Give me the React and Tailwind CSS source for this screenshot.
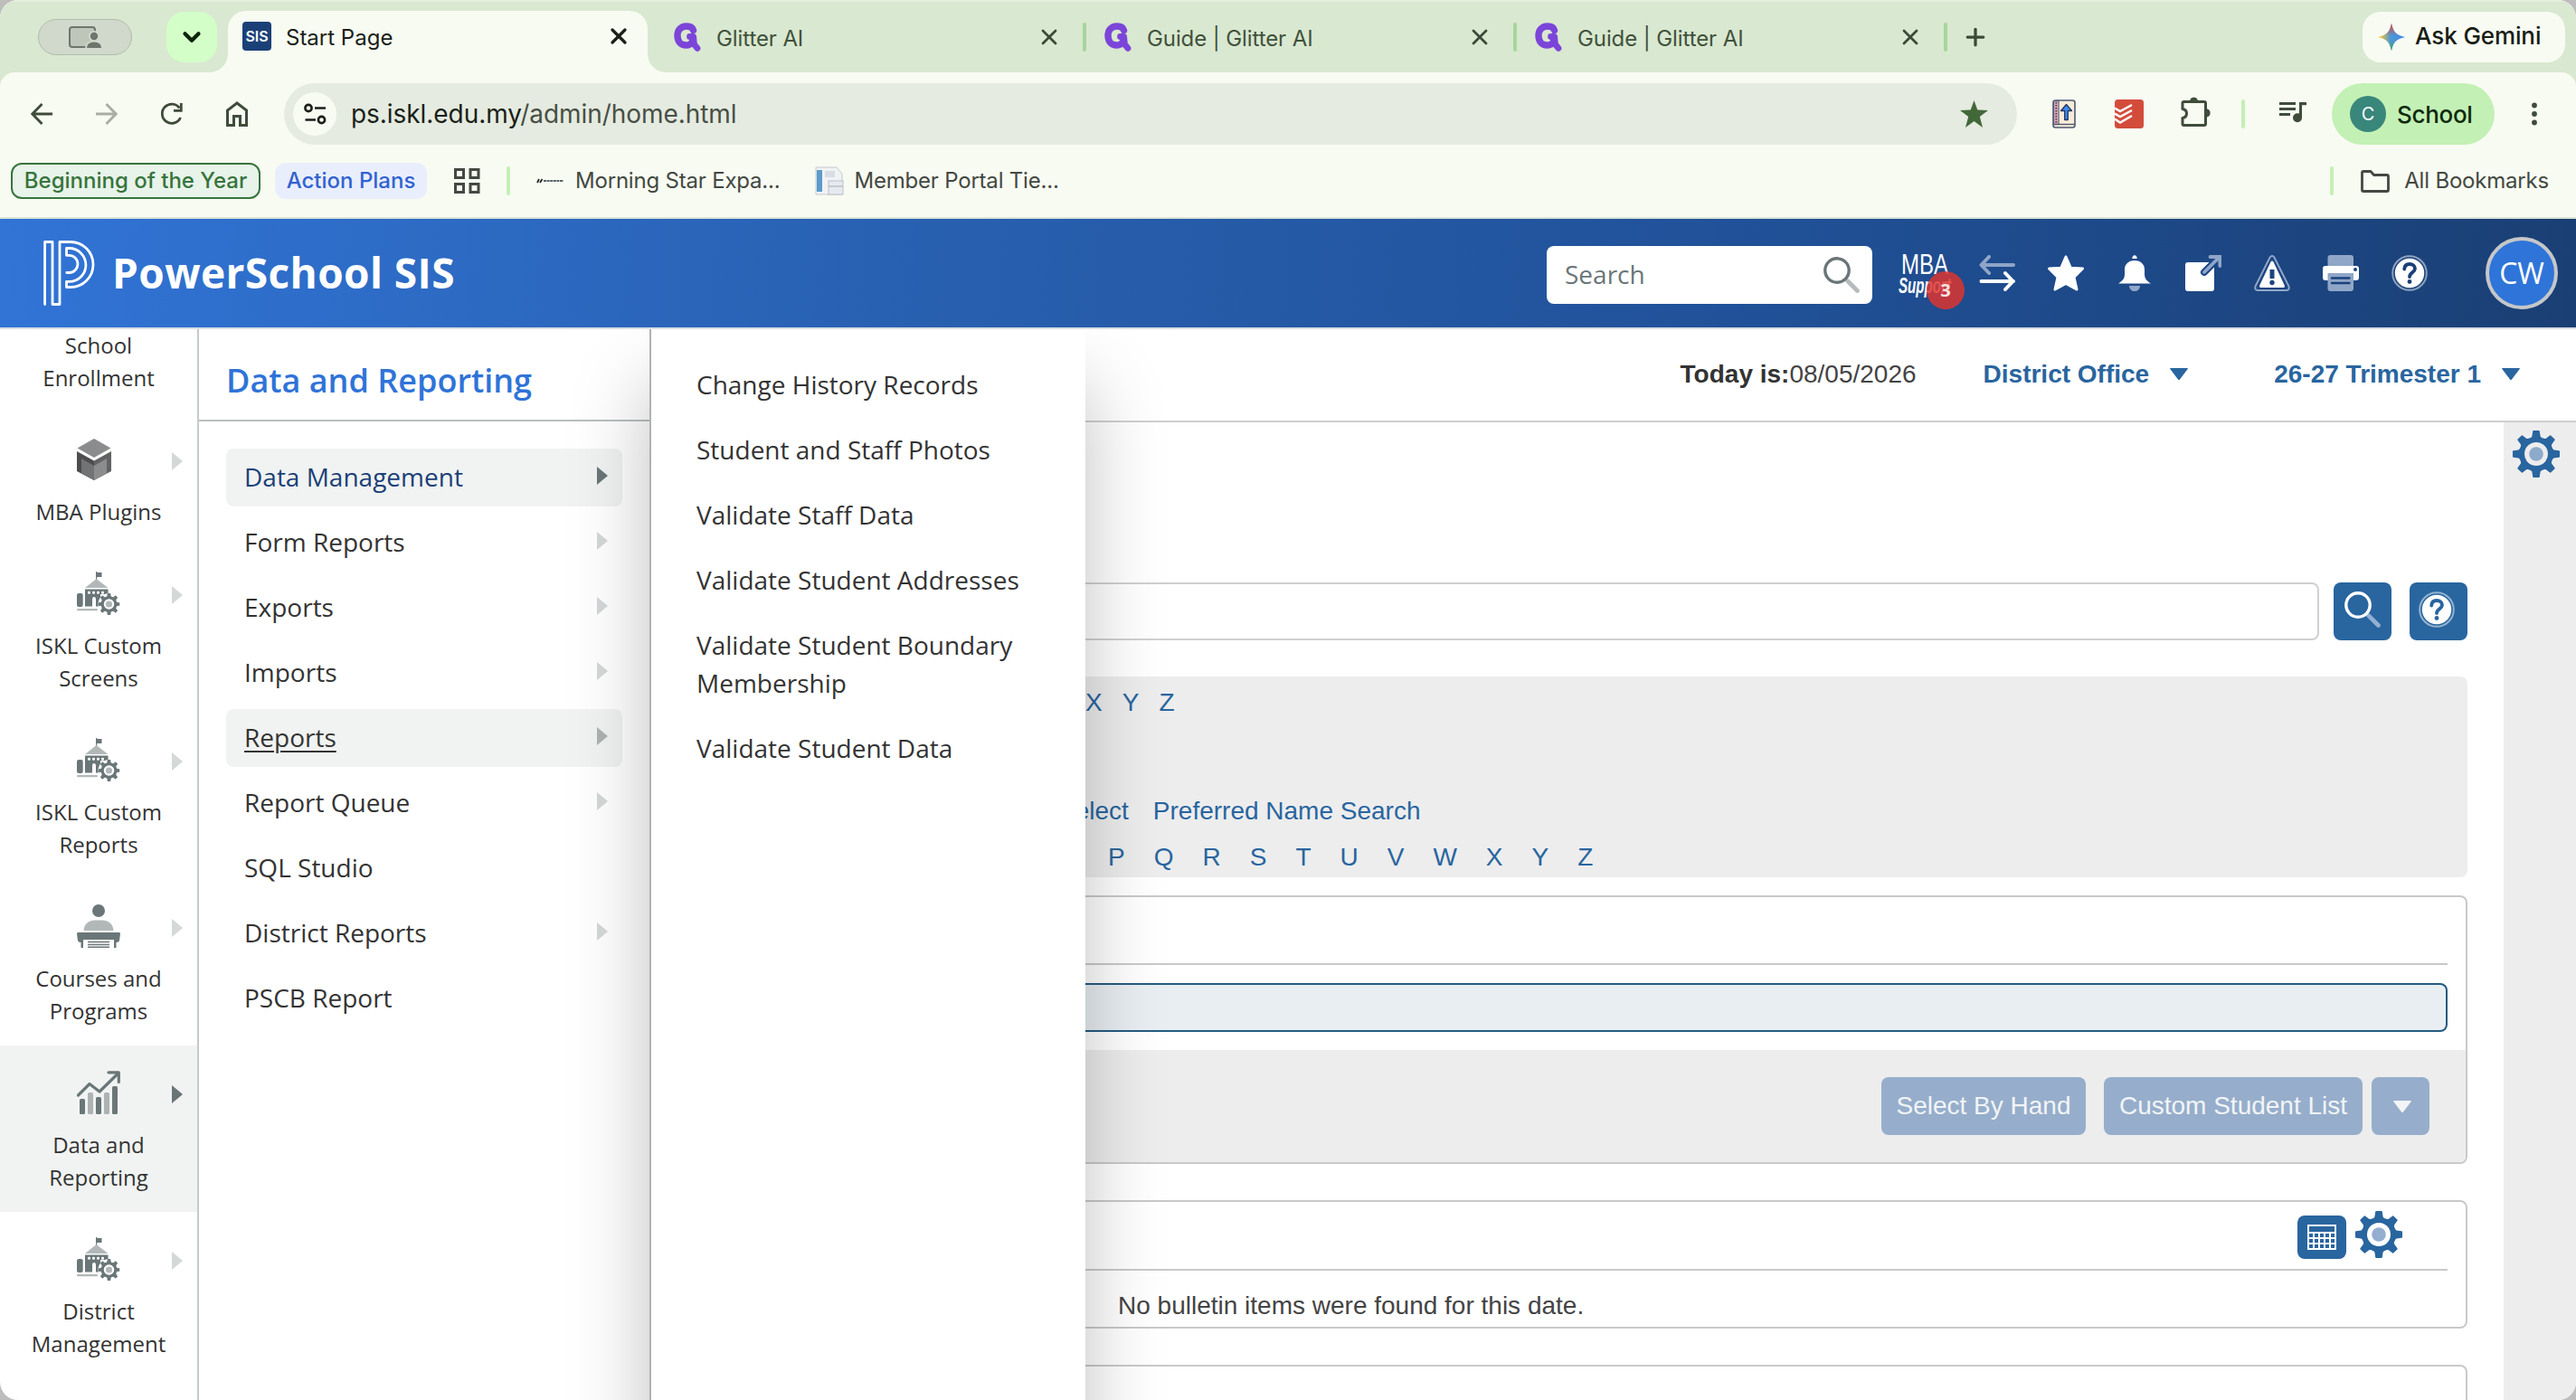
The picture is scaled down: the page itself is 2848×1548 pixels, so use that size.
import { Fragment } from 'react';
import { X, Plus, ChevronDown } from 'lucide-react';
import clsx from 'clsx';

const chrome = "font-['Inter',sans-serif]";
const openSans = "font-['Open_Sans',sans-serif]";
const arial = "font-['Liberation_Sans',Arial,sans-serif]";

const sideItems = [
  { lines: ['School', 'Enrollment'] },
  { lines: ['MBA Plugins'], icon: 'cube' },
  { lines: ['ISKL Custom', 'Screens'], icon: 'school' },
  { lines: ['ISKL Custom', 'Reports'], icon: 'school' },
  { lines: ['Courses and', 'Programs'], icon: 'courses' },
  { lines: ['Data and', 'Reporting'], icon: 'chart', active: true },
  { lines: ['District', 'Management'], icon: 'school' },
];

const menuItems = [
  { label: 'Data Management', arrow: true, selected: true },
  { label: 'Form Reports', arrow: true },
  { label: 'Exports', arrow: true },
  { label: 'Imports', arrow: true },
  { label: 'Reports', arrow: true, hovered: true },
  { label: 'Report Queue', arrow: true },
  { label: 'SQL Studio' },
  { label: 'District Reports', arrow: true },
  { label: 'PSCB Report' },
];

const subItems = [
  'Change History Records',
  'Student and Staff Photos',
  'Validate Staff Data',
  'Validate Student Addresses',
  'Validate Student Boundary Membership',
  'Validate Student Data',
];

/* ---------- icons ---------- */

const GlitterIcon = () => (
  <svg width="30" height="32" viewBox="0 0 30 32" fill="none" stroke="#7c45d9">
    <path d="M21.5 8.5 C20.5 5 17.5 4 14 4 C7.5 4 4 8.5 4 14.5 C4 21 8 25 13.5 25 C18.5 25 21 22 21.5 17" strokeWidth="7.4" strokeLinecap="round" />
    <path d="M17.5 15.5 H21.5 L22.5 24 L26 28.3" strokeWidth="6.8" strokeLinecap="round" strokeLinejoin="round" />
  </svg>
);

const TOOTH = 'M22.2 0.8 Q22.4 0 23.2 0 H28.8 Q29.6 0 29.8 0.8 L30.6 6.5 Q31.5 8 34 9 L26 20 L18 9 Q20.5 8 21.4 6.5 Z';

const Gear = ({ size = 52, color = '#29659f', hole = '#ffffff', dot = '#93aed0', className }) => (
  <svg width={size} height={size} viewBox="0 0 52 52" className={className}>
    <g fill={color}>
      {[0, 45, 90, 135, 180, 225, 270, 315].map((a) => (
        <path key={a} d={TOOTH} transform={`rotate(${a} 26 26)`} />
      ))}
      <circle cx="26" cy="26" r="18" />
    </g>
    <circle cx="26" cy="26" r="13" fill={hole} />
    <circle cx="26" cy="26" r="7.8" fill={dot} />
  </svg>
);

const CubeIcon = () => (
  <svg width="38" height="48" viewBox="0 0 38 48">
    <path d="M19 1 L37.5 11.5 L19 22 L0.5 11.5 Z" fill="#8b8c8e" />
    <path d="M0 15 L19 25.5 V47 L0 37 Z" fill="#4d4c4e" />
    <path d="M38 15 L19 25.5 V47 L38 37 Z" fill="#626164" />
    <path d="M5 23 L19 31 V47 L5 39.5 Z" fill="#727375" />
    <path d="M33 23 L19 31 V47 L33 39.5 Z" fill="#8b8c8e" />
  </svg>
);

const SchoolIcon = ({ bg }) => (
  <svg width="48" height="48" viewBox="0 0 48 48">
    <path d="M21 0 H22.2 V1 H27.5 V6 H22.2 V9 H21 Z" fill="#6a7678" />
    <path d="M21.5 8 L34.5 18 H9 Z" fill="#b2b8b8" />
    <path d="M9 19.5 H34.5 V25 H26 V38.5 H9 Z" fill="#6a7678" />
    <rect x="0" y="24" width="6.7" height="15" rx="2" fill="#6a7678" />
    <rect x="0" y="41" width="23" height="2.2" rx="1" fill="#b2b8b8" />
    <g fill={bg}>
      <rect x="12" y="21.8" width="3" height="3" rx="1.2" />
      <rect x="17" y="21.8" width="3" height="3" rx="1.2" />
      <rect x="22" y="21.8" width="3" height="3" rx="1.2" />
      <rect x="27" y="21.8" width="3" height="3" rx="1.2" />
      <path d="M17 39 V31 Q17 28 19 28 Q21 28 21 31 V39 Z" />
      <circle cx="35.5" cy="36" r="12" />
    </g>
    <svg x="23.5" y="24" width="24" height="24" viewBox="0 0 52 52">
      <g fill="#6a7678">
        {[0, 45, 90, 135, 180, 225, 270, 315].map((a) => (
          <path key={a} d={TOOTH} transform={`rotate(${a} 26 26)`} />
        ))}
        <circle cx="26" cy="26" r="18" />
      </g>
      <circle cx="26" cy="26" r="12.5" fill={bg} />
      <circle cx="26" cy="26" r="7.8" fill="#b2b8b8" />
    </svg>
  </svg>
);

const CoursesIcon = () => (
  <svg width="48" height="48" viewBox="0 0 48 48">
    <circle cx="24" cy="7" r="7" fill="#6a7678" />
    <path d="M7.5 29 C8 21 14 17.5 20 17.5 H28 C34 17.5 40 21 40.5 29 Z" fill="#b2b8b8" />
    <path d="M1 31 H47 Q48 31 48 32.5 L47 40 Q46.5 42 44 42 H43.5 V48 H41 V39 H7 V48 H4.5 V42 H4 Q1.5 42 1 40 L0 32.5 Q0 31 1 31 Z" fill="#6a7678" />
    <path d="M12 41.5 H36 M12 44.4 H36 M12 47.3 H36" stroke="#6a7678" strokeWidth="1.5" />
  </svg>
);

const ChartIcon = () => (
  <svg width="48" height="48" viewBox="0 0 48 48">
    <g fill="#6a7678">
      <rect x="3" y="31" width="6" height="17" rx="1.5" />
      <rect x="21" y="29" width="6" height="19" rx="1.5" />
      <rect x="39" y="17" width="6" height="31" rx="1.5" />
    </g>
    <g fill="#adb3b3">
      <rect x="12" y="24" width="6" height="24" rx="1.5" />
      <rect x="30" y="24" width="6" height="24" rx="1.5" />
    </g>
    <path d="M1.5 27 L14 14.5 L25 23 L45.5 3" fill="none" stroke="#6a7678" strokeWidth="3.2" strokeLinecap="round" strokeLinejoin="round" />
    <path d="M35 1.8 H46.3 V12.5" fill="none" stroke="#6a7678" strokeWidth="3.2" strokeLinecap="round" strokeLinejoin="round" />
  </svg>
);

const HelpIcon = ({ dark, className }) => (
  <svg width="40" height="40" viewBox="0 0 40 40" className={className}>
    <circle cx="20" cy="20" r="18.8" fill="none" stroke="#fff" strokeOpacity="0.5" strokeWidth="2" />
    <circle cx="20" cy="20" r="16.2" fill="#fff" />
    <path d="M14.2 15.5 C14.5 11.5 17 10 20 10 C23.5 10 26 12 26 15 C26 19 20 19.5 20 24" fill="none" stroke={dark} strokeWidth="3.8" strokeLinecap="round" />
    <circle cx="20" cy="29.5" r="2.4" fill={dark} />
  </svg>
);

const SearchIcon = ({ color, handle }) => (
  <svg width="40" height="40" viewBox="0 0 40 40" fill="none">
    <path d="M26.5 26.5 L37.5 37.5" stroke={handle} strokeWidth="4.6" strokeLinecap="round" />
    <circle cx="15" cy="15" r="13.2" stroke={color} strokeWidth="3.4" />
  </svg>
);

const Logo = () => (
  <svg width="57" height="72" viewBox="0 0 57 72" fill="none" stroke="#fff" strokeWidth="2.8" strokeLinejoin="round" strokeLinecap="round">
    <path d="M1.6 70.6 V1.5 H10 V70.5 H18 V1.5 H30 A25 25 0 0 1 30 51.5 H25.5 V45.3 H28.5 A18.4 18.4 0 0 0 28.5 8.5 H25.5 V16.3 H28.3 A9.6 9.6 0 0 1 28.3 35.5 H25.8" />
  </svg>
);

const TriRight = ({ className }) => (
  <svg width="12" height="20" viewBox="0 0 12 20" className={className} fill="currentColor">
    <path d="M0 0 L12 10 L0 20 Z" />
  </svg>
);

const TriDown = ({ className }) => (
  <svg width="20" height="13" viewBox="0 0 20 13" className={className} fill="currentColor">
    <path d="M0.5 0 H19.5 Q20 0.5 19.7 1 L11 12.4 Q10 13.4 9 12.4 L0.3 1 Q0 0.5 0.5 0 Z" />
  </svg>
);

/* ---------- browser ---------- */

const Tab = ({ title }) => (
  <div className="flex h-full w-[476px] items-center">
    <GlitterIcon />
    <span className="ml-[17px] flex-1 pt-[3px] text-[#41513c] tracking-[-0.1px]">{title}</span>
    <X size={28} strokeWidth={2.4} className="mr-[23px] text-[#3b4a37]" />
    <span className="mr-[20px] h-8 w-1 rounded-full bg-[#a6d69b]" />
  </div>
);

const TabStrip = () => (
  <div className="flex h-[80px] items-center border-t-2 border-[#e6efe0] bg-[#d9e8d0] pl-[42px] text-[24px] leading-none">
    <div className="flex h-10 w-[104px] items-center justify-center rounded-full border border-[#b3bcae] bg-[#d1d8cc]">
      <svg width="36" height="26" viewBox="0 0 36 26">
        <rect x="1" y="2" width="28" height="22" rx="3" fill="#bec6ba" stroke="#6f756c" strokeWidth="2" />
        <circle cx="28" cy="12" r="6" fill="#d1d8cc" />
        <path d="M18 26 Q18 17 28 17 Q36 17 36 26 Z" fill="#d1d8cc" />
        <circle cx="28" cy="12" r="4.2" fill="#6f756c" />
        <path d="M20 25 Q20 18.5 28 18.5 Q36 18.5 36 25 Z" fill="#6f756c" />
      </svg>
    </div>
    <div className="ml-[38px] flex h-14 w-14 items-center justify-center rounded-[20px] bg-[#d3fec8]">
      <ChevronDown size={30} strokeWidth={3.4} className="text-[#0b2308]" />
    </div>
    <div className="relative ml-3 mt-[10px] flex h-[68px] w-[464px] items-center rounded-t-[20px] bg-[#f8fbf2] pb-[12px] pl-4">
      <span className="absolute -left-5 bottom-0 h-5 w-5 bg-[radial-gradient(circle_at_0_0,transparent_19.5px,#f8fbf2_20px)]" />
      <span className="absolute -right-5 bottom-0 h-5 w-5 bg-[radial-gradient(circle_at_100%_0,transparent_19.5px,#f8fbf2_20px)]" />
      <span className="flex h-8 w-8 items-center justify-center rounded-[4px] bg-[#1b4077] text-[16px] font-semibold text-white">SIS</span>
      <span className="ml-4 flex-1 pt-[3px] text-[#1a1f18]">Start Page</span>
      <X size={28} strokeWidth={2.8} className="mr-[18px] text-[#1a1f18]" />
    </div>
    <div className="ml-[29px] flex h-full items-center">
      <Tab title="Glitter AI" />
      <Tab title="Guide | Glitter AI" />
      <Tab title="Guide | Glitter AI" />
    </div>
    <Plus size={30} strokeWidth={2.6} className="-ml-[4px] text-[#3b4a37]" />
    <div className="ml-auto mr-3 flex h-14 w-[224px] items-center rounded-[20px] bg-[#f8fbf2] pl-[17px]">
      <svg width="30" height="30" viewBox="0 0 30 30">
        <defs>
          <linearGradient id="gemA" x1="0" y1="0" x2="1" y2="0">
            <stop offset="0.1" stopColor="#f6c445" />
            <stop offset="0.45" stopColor="#4f9ad0" />
            <stop offset="1" stopColor="#4285f4" />
          </linearGradient>
          <linearGradient id="gemB" x1="0" y1="0" x2="0" y2="1">
            <stop offset="0" stopColor="#ea4335" />
            <stop offset="0.45" stopColor="#ea4335" stopOpacity="0" />
            <stop offset="0.65" stopColor="#34a853" stopOpacity="0" />
            <stop offset="1" stopColor="#34a853" />
          </linearGradient>
        </defs>
        <path d="M15 0 C17.500 10 20 12.500 30 15 C20 17.500 17.500 20 15 30 C12.500 20 10 17.500 0 15 C10 12.500 12.500 10 15 0 Z" fill="url(#gemA)" />
        <path d="M15 0 C17.500 10 20 12.500 30 15 C20 17.500 17.500 20 15 30 C12.500 20 10 17.500 0 15 C10 12.500 12.500 10 15 0 Z" fill="url(#gemB)" />
      </svg>
      <span className="ml-[11px] pb-[3px] text-[26px] font-medium tracking-[-0.1px] text-[#171d15]">Ask Gemini</span>
    </div>
  </div>
);

const Toolbar = () => (
  <div className="bg-[#d9e8d0]">
    <div className="flex h-[92px] items-center rounded-t-[16px] bg-[#f8fbf2] pl-[34px] leading-none">
      <svg width="24" height="24" viewBox="0 0 24 24" fill="none" stroke="#3f4c3a" strokeWidth="2.8">
        <path d="M24 12 H2 M12.5 1 L1.8 12 L12.5 23" />
      </svg>
      <svg width="24" height="24" viewBox="0 0 24 24" fill="none" stroke="#a9ada4" strokeWidth="2.8" className="ml-12">
        <path d="M0 12 H22 M11.5 1 L22.2 12 L11.5 23" />
      </svg>
      <svg width="26" height="26" viewBox="0 0 26 26" fill="none" stroke="#3f4c3a" strokeWidth="2.8" className="ml-[47px]">
        <path d="M22.6 17 A10.6 10.6 0 1 1 21.5 6.5 M23.3 1 V9.3 H15" />
      </svg>
      <svg width="24" height="28" viewBox="0 0 24 28" fill="none" stroke="#3f4c3a" strokeWidth="3" className="ml-[47px]">
        <path d="M1.5 26.5 V10 L12 2 L22.5 10 V26.5 H15.5 V16.5 H8.5 V26.5 Z" />
      </svg>
      <div className="ml-10 flex h-[68px] w-[1916px] items-center rounded-full bg-[#e5ebe0] pl-[10px]">
        <span className="flex h-12 w-12 items-center justify-center rounded-full bg-[#f8fbf2]">
          <svg width="26" height="24" viewBox="0 0 26 24" fill="none" stroke="#1a1f18" strokeWidth="2.6">
            <circle cx="6" cy="5.5" r="3.6" />
            <path d="M13 5.5 H25 M2.5 18.5 H14" />
            <circle cx="20.5" cy="18.5" r="3.6" />
          </svg>
        </span>
        <span className="ml-4 flex-1 text-[28px] tracking-[-0.06px] text-[#484f45]">
          <span className="text-[#1a1f18]">ps.iskl.edu.my</span>/admin/home.html
        </span>
        <svg width="31" height="30" viewBox="0 0 31 30" className="mr-8" fill="#42683a">
          <path d="M15.5 0 L19.3 10.6 L31 11 L21.8 18 L25 30 L15.5 23 L6 30 L9.2 18 L0 11 L11.7 10.6 Z" />
        </svg>
      </div>
      <svg width="26" height="32" viewBox="0 0 26 32" className="ml-[39px]">
        <rect x="1" y="1" width="24" height="30" rx="2.5" fill="#f8ecd9" stroke="#4d5a72" strokeWidth="1.6" />
        <rect x="1.6" y="1.6" width="5.5" height="26" fill="#d9a6b4" stroke="#4d5a72" strokeWidth="1" />
        <path d="M4.3 3 V27" stroke="#3a3550" strokeWidth="1.6" strokeDasharray="1.5 1.5" />
        <path d="M1.5 27.5 H25" stroke="#4d5a72" strokeWidth="1.4" />
        <path d="M15.5 5.5 L21.5 12.5 H17.3 V22.5 H13.7 V12.5 H9.5 Z" fill="#3f8cf0" stroke="#22355c" strokeWidth="1.3" strokeLinejoin="round" />
      </svg>
      <svg width="32" height="32" viewBox="0 0 32 32" className="ml-[43px]">
        <rect width="32" height="32" rx="3.5" fill="#d34c3b" />
        <path d="M0 9.5 L6 13 L19 6 M0 15.5 L6 19 L19 12 M0 21.5 L6 25.5 L19 18" fill="none" stroke="#fff" strokeWidth="2.5" />
      </svg>
      <svg width="33" height="33" viewBox="0 0 33 33" className="-mt-[5px] ml-[41px]" fill="none" stroke="#3f4c3a" strokeWidth="3" strokeLinejoin="round">
        <path d="M2 13.5 V7 Q2 5.5 3.5 5.5 H26 Q27.5 5.5 27.5 7 V30 Q27.5 31.5 26 31.5 H3.5 Q2 31.5 2 30 V23.5 C8 22.5 8 14.5 2 13.5 Z" />
        <path d="M10.5 5 A3.8 3.8 0 0 1 18.5 5 Z M28 13.8 A4 4 0 0 1 28 22 Z" fill="#3f4c3a" strokeWidth="1" />
      </svg>
      <span className="ml-[34px] h-8 w-1 rounded-full bg-[#c3f0b5]" />
      <svg width="31" height="24" viewBox="0 0 31 24" className="-mt-1 ml-[38px]">
        <path d="M0 2.5 H18 M0 8.5 H18 M0 14.5 H12" stroke="#3f4c3a" strokeWidth="2.9" />
        <path d="M22 1 H30 V4.2 H25 V19 H22 Z" fill="#3f4c3a" />
        <circle cx="20" cy="18.2" r="5" fill="#3f4c3a" />
      </svg>
      <div className="ml-[27px] flex h-[68px] w-[180px] items-center rounded-full bg-[#c3f0b5] pl-5">
        <span className="flex h-10 w-10 items-center justify-center rounded-full bg-[#39867b] text-[20px] text-white">C</span>
        <span className="ml-3 pt-[1px] text-[26px] font-medium tracking-[-0.3px] text-[#0f2a0b]">School</span>
      </div>
      <svg width="6" height="26" viewBox="0 0 6 26" className="ml-[41px]" fill="#3f4c3a">
        <circle cx="3" cy="3.5" r="2.9" />
        <circle cx="3" cy="13" r="2.9" />
        <circle cx="3" cy="22.5" r="2.9" />
      </svg>
    </div>
  </div>
);

const Bookmarks = () => (
  <div className="flex h-[70px] items-center border-b-2 border-[#dbe3d6] bg-[#f8fbf2] pb-[12px] pl-3 text-[24px] leading-none text-[#434842]">
    <span className="flex h-10 w-[276px] items-center justify-center rounded-[12px] border-2 border-[#37743c] bg-[#e8f3ea] font-medium text-[#37743c]">Beginning of the Year</span>
    <span className="ml-4 flex h-10 w-[168px] items-center justify-center rounded-[12px] bg-[#e9eefd] font-medium text-[#3262cf]">Action Plans</span>
    <svg width="29" height="28" viewBox="0 0 29 28" className="ml-[30px]" fill="none" stroke="#434842" strokeWidth="3">
      <path d="M1.5 1.5 H10.5 V10.5 H1.5 Z M18 1.5 H27 V10.5 H18 Z M1.5 17.5 H10.5 V26.5 H1.5 Z M18 17.5 H27 V26.5 H18 Z" />
    </svg>
    <span className="ml-[29px] h-8 w-1 rounded-full bg-[#c3f0b5]" />
    <svg width="31" height="6" viewBox="0 0 31 6" className="ml-[29px]">
      <path d="M1 5 L3 1 M4 5 L6.5 1" stroke="#22262a" strokeWidth="1.8" />
      <path d="M8 3 H30" stroke="#5a6468" strokeWidth="2" strokeDasharray="3 0.6" />
    </svg>
    <span className="ml-[12px] tracking-[-0.2px]">Morning Star Expa...</span>
    <svg width="32" height="32" viewBox="0 0 32 32" className="ml-[39px]">
      <path d="M1 1 H24 L30 8 V31 H1 Z" fill="#f0f2f4" stroke="#c3c9d0" strokeWidth="1" />
      <rect x="2" y="4" width="6" height="24" fill="#5b9bcb" />
      <rect x="11" y="5" width="11" height="7" fill="#d7dde4" />
      <rect x="15" y="16" width="16" height="15" fill="#e6e9ee" stroke="#b9c0c9" strokeWidth="1" />
      <path d="M15 22 H31" stroke="#b9c0c9" strokeWidth="1.5" />
    </svg>
    <span className="ml-[11px] tracking-[-0.2px]">Member Portal Tie...</span>
    <span className="ml-auto h-8 w-1 rounded-full bg-[#c3f0b5]" />
    <svg width="32" height="25" viewBox="0 0 32 25" className="ml-[30px]" fill="none" stroke="#434842" strokeWidth="2.8" strokeLinejoin="round">
      <path d="M1.5 3 Q1.5 1.5 3 1.5 H11 L14.5 5.5 H29 Q30.5 5.5 30.5 7 V22 Q30.5 23.5 29 23.5 H3 Q1.5 23.5 1.5 22 Z" />
    </svg>
    <span className="ml-[16px] mr-[30px] tracking-[-0.2px]">All Bookmarks</span>
  </div>
);

/* ---------- PowerSchool ---------- */

const Header = () => (
  <div className={clsx('relative z-20 flex h-[122px] items-center border-b-2 border-[#d9dde2] bg-[linear-gradient(93deg,#3174d6_0%,#2860b0_36%,#21529a_66%,#1a3f74_100%)] pl-12', openSans)}>
    <Logo />
    <span className="ml-[19px] pb-[3px] text-[46px] font-bold leading-none tracking-[0.4px] text-white">PowerSchool SIS</span>
    <div className="ml-auto mt-[4px] flex h-16 w-[360px] items-center rounded-[8px] bg-white pl-5 pr-[14px]">
      <span className="flex-1 pb-[2px] text-[28px] leading-none text-[#6a7577]">Search</span>
      <SearchIcon color="#6a7577" handle="#b5baba" />
    </div>
    <div className="relative ml-[28px] h-[64px] w-[78px]">
      <svg width="78" height="64" viewBox="0 0 78 64" fill="#fff" className="overflow-visible font-['Liberation_Sans',Arial,sans-serif]">
        <text x="4" y="33" fontSize="31" textLength="52" lengthAdjust="spacingAndGlyphs">MBA</text>
        <text x="1" y="54" fontSize="24" fontWeight="bold" fontStyle="italic" textLength="58" lengthAdjust="spacingAndGlyphs">Support</text>
      </svg>
      <span className="absolute left-[32px] top-[30px] flex h-[42px] w-[42px] items-center justify-center rounded-full bg-[#dc3530]/85 text-[20px] font-bold leading-none text-white/85">3</span>
    </div>
    <div className="ml-[12px] flex items-center gap-9">
      <svg width="40" height="40" viewBox="0 0 40 40" fill="none" stroke="#fff" strokeWidth="4" strokeLinecap="round" strokeLinejoin="round">
        <path d="M2.5 11 H38 M11 2 L2.5 11 L11 20" stroke="#90a6c8" />
        <path d="M2.5 29 H38 M29 20 L37.5 29 L29 38" />
      </svg>
      <svg width="40" height="40" viewBox="0 0 40 40" fill="#fff" stroke="#fff" strokeWidth="3" strokeLinejoin="round">
        <path d="M20 2 L25.2 14.2 L38.5 15 L29 24.5 L32 38 L20 31.5 L8 38 L11 24.5 L1.5 15 L14.8 14.2 Z" />
      </svg>
      <svg width="40" height="40" viewBox="0 0 40 40">
        <path d="M17.3 4 Q17.5 0.3 20 0.3 Q22.5 0.3 22.7 4 Z" fill="#fff" />
        <path d="M20 6 C27 6 31 10.5 31 16 V21 C31 26.5 33.5 28.5 38 31.5 H2 C6.5 28.5 9 26.5 9 21 V16 C9 10.5 13 6 20 6 Z" fill="#fff" />
        <path d="M13.8 34 H26.2 C25.5 38 23.5 40 20 40 C16.5 40 14.5 38 13.8 34 Z" fill="#90a6c8" />
      </svg>
      <svg width="40" height="40" viewBox="0 0 40 40">
        <rect x="0" y="8" width="32" height="32" rx="3" fill="#fff" />
        <path d="M21 19 L37 3" stroke="#1c478a" strokeWidth="8" strokeLinecap="round" />
        <path d="M21 19 L37 3 M27.5 2 H38.3 V12" fill="none" stroke="#90a6c8" strokeWidth="3.8" strokeLinecap="round" />
      </svg>
      <svg width="40" height="40" viewBox="0 0 40 40">
        <path d="M17.5 2.7 Q20 -0.6 22.5 2.7 L38.5 34.5 Q39.5 38.7 36 39 H4 Q0.5 38.7 1.5 34.5 Z" fill="none" stroke="#90a6c8" strokeWidth="2" />
        <path d="M18.5 7.5 Q20 5.5 21.5 7.5 L34 34 Q34.3 36 32.5 36 H7.5 Q5.7 36 6 34 Z" fill="#fff" />
        <path d="M17.5 16 H22.5 V26 H17.5 Z" fill="#1c457f" />
        <circle cx="20" cy="30.5" r="2.7" fill="#1c457f" />
      </svg>
      <svg width="40" height="40" viewBox="0 0 40 40">
        <path d="M5.5 14 V3 Q5.5 0 8.5 0 H31 Q34 0 34 3 V14 Z" fill="#90a6c8" />
        <path d="M3 12 H37 Q40 12 40 15 V25 Q40 28 37 28 H3 Q0 28 0 25 V15 Q0 12 3 12 Z" fill="#fff" />
        <circle cx="36" cy="16" r="2" fill="#1b427b" />
        <path d="M5.5 20 H34 V37 Q34 40 31 40 H8.5 Q5.5 40 5.5 37 Z" fill="#90a6c8" />
        <path d="M10 25.5 H29.5 M10 31 H29.5" stroke="#1b427b" strokeWidth="2.4" strokeLinecap="round" />
      </svg>
      <HelpIcon dark="#1b4178" />
    </div>
    <span className="ml-16 mr-5 flex h-20 w-20 items-center justify-center rounded-full border-4 border-[#c5c7c9] bg-[#2f74d8] text-[32px] leading-none text-white">CW</span>
  </div>
);

const SideIcon = ({ name, bg }) => {
  switch (name) {
    case 'cube': return <CubeIcon />;
    case 'courses': return <CoursesIcon />;
    case 'chart': return <ChartIcon />;
    default: return <SchoolIcon bg={bg} />;
  }
};

const Sidebar = () => (
  <div className={clsx('h-full w-[220px] shrink-0 border-r-2 border-[#c4cacb] text-center text-[24px] leading-[36px] text-[#333]', openSans)}>
    {sideItems.map(({ lines, icon, active }, i) => (
      <div key={i} className={clsx('pb-5', icon && 'pt-7', active && 'bg-[#f1f3f2]')}>
        {icon && (
          <div className="mb-4 flex h-12 pl-[85px] pr-4">
            <div className="w-[48px]"><SideIcon name={icon} bg={active ? '#f1f3f2' : '#fff'} /></div>
            <TriRight className={clsx('ml-auto mt-4', active ? 'text-[#6a7577]' : 'text-[#d4d8d8]')} />
          </div>
        )}
        {lines.map((l) => <div key={l}>{l}</div>)}
      </div>
    ))}
  </div>
);

const MenuPanel = () => (
  <div className={clsx('h-full w-[498px] shrink-0', openSans)}>
    <div className="flex h-[102px] items-center border-b-2 border-[#b9c0c0] pl-[30px] pt-[13px] text-[36px] font-semibold text-[#2f73d8]">Data and Reporting</div>
    <div className="flex flex-col gap-2 px-[30px] pt-[30px]">
      {menuItems.map(({ label, arrow, selected, hovered }) => (
        <div
          key={label}
          className={clsx(
            'flex h-16 items-center rounded-[8px] pl-5 pr-4 text-[28px]',
            selected ? 'bg-[#f1f3f2] text-[#1b4077]' : 'text-[#333]',
            hovered && 'bg-[#f1f3f2]'
          )}
        >
          <span className={clsx('flex-1 pb-[2px]', hovered && 'underline decoration-2 underline-offset-[4px]')}>{label}</span>
          {arrow && (
            <TriRight className={clsx('-mt-1', selected ? 'text-[#6a7577]' : hovered ? 'text-[#adb3b3]' : 'text-[#d4d8d8]')} />
          )}
        </div>
      ))}
    </div>
  </div>
);

const SubMenu = () => (
  <div className={clsx('relative z-10 flex h-[1400px] w-[482px] shrink-0 flex-col gap-[30px] border-l-2 border-[#adb3b3] bg-white pl-[50px] pr-[60px] pt-[40px] text-[28px] leading-[42px] text-[#333] shadow-[0_60px_80px_rgba(0,0,0,0.25)]', openSans)}>
    {subItems.map((s) => <div key={s}>{s}</div>)}
  </div>
);

const QuickSearch = () => (
  <>
    <div className="flex h-16 items-center">
      <div className="h-16 flex-1 rounded-r-[8px] border-2 border-l-0 border-[#d0d0d0] bg-white" />
      <div className="ml-4 flex h-16 w-16 items-center justify-center rounded-[8px] bg-[#29659f] pb-1">
        <SearchIcon color="#fff" handle="#93b0d2" />
      </div>
      <div className="ml-5 flex h-16 w-16 items-center justify-center rounded-[8px] bg-[#29659f] pb-1 pr-1">
        <HelpIcon dark="#29659f" />
      </div>
    </div>
    <div className="mt-10 h-[222px] rounded-r-[8px] bg-[#ededed] pt-[11px] text-[28px] leading-[36px] text-[#29659f]">
      <div className="flex gap-[22px]">
        <span>X</span><span>Y</span><span>Z</span>
      </div>
      <div className="-ml-[30px] mt-[84px] flex gap-[27px]">
        <span>Select</span><span>Preferred Name Search</span>
      </div>
      <div className="mt-[15px] flex gap-[32px] pl-[25px]">
        {'PQRSTUVWXYZ'.split('').map((l) => <span key={l}>{l}</span>)}
      </div>
    </div>
  </>
);

const Main = () => (
  <div className={clsx('min-w-0 flex-1', arial)}>
    <div className="flex h-[103px] items-center justify-end border-b-2 border-[#cfcfcf] pb-[2px] text-[28px] leading-none">
      <span className="text-[#444]"><b className="text-[#333]">Today is:</b>08/05/2026</span>
      <span className="ml-[74px] font-bold text-[#29659f]">District Office</span>
      <TriDown className="ml-[23px] text-[#29659f]" />
      <span className="ml-[95px] font-bold text-[#29659f]">26-27 Trimester 1</span>
      <TriDown className="ml-[23px] mr-[62px] text-[#29659f]" />
    </div>
    <div className="flex h-[1081px]">
      <div className="flex-1 pr-10 pt-[177px]">
        <QuickSearch />

        <div className="mt-5 h-[297px] overflow-hidden rounded-r-[8px] border-2 border-l-0 border-[#c9c9c9]">
          <div className="mr-5 h-[75px] border-b-2 border-[#c9c9c9]" />
          <div className="mr-5 mt-5 h-[54px] rounded-r-[8px] border-2 border-l-0 border-[#255b82] bg-[#e9eef2]" />
          <div className="mt-5 flex h-[124px] items-center justify-end bg-[#ededed] pr-10 text-[28px] leading-none text-[#f2f4f7]">
            <span className="flex h-16 w-[226px] items-center justify-center rounded-[8px] bg-[#96aecb]">Select By Hand</span>
            <span className="ml-5 flex h-16 w-[286px] items-center justify-center rounded-[8px] bg-[#96aecb]">Custom Student List</span>
            <span className="ml-[10px] flex h-16 w-16 items-center justify-center rounded-[8px] bg-[#96aecb] pl-1">
              <TriDown />
            </span>
          </div>
        </div>

        <div className="mt-10 h-[142px] rounded-r-[8px] border-2 border-l-0 border-[#c9c9c9]">
          <div className="mr-5 flex h-[76px] items-start justify-end border-b-2 border-[#c9c9c9] pr-[50px]">
            <span className="mt-[15px] flex h-12 w-[54px] items-center justify-center rounded-[8px] bg-[#29659f]">
              <svg width="32" height="28" viewBox="0 0 32 28">
                <rect width="32" height="28" fill="#fff" />
                <rect x="2" y="2" width="28" height="6" fill="#29659f" />
                {[10, 16, 22].map((y) => (
                  <Fragment key={y}>
                    {[2, 8, 14, 20, 26].map((x) => <rect key={x} x={x} y={y} width="4" height="4" fill="#29659f" />)}
                  </Fragment>
                ))}
              </svg>
            </span>
            <Gear className="ml-[10px] mt-[10px]" />
          </div>
          <div className="pl-[36px] pt-[21px] text-[28px] leading-[36px] text-[#444]">No bulletin items were found for this date.</div>
        </div>

        <div className="mt-10 h-[80px] rounded-r-[8px] border-2 border-l-0 border-[#c9c9c9]" />
      </div>
      <div className="flex w-20 justify-center bg-[#ededed] pr-[8px] pt-[9px]">
        <Gear hole="#ededed" dot="#8eaaca" />
      </div>
    </div>
  </div>
);

export default function App() {
  return (
    <div className="h-[1548px] w-[2848px] overflow-hidden bg-[#bdbdbd]">
      <div className={clsx('h-full overflow-hidden rounded-[20px] bg-white', chrome)}>
        <TabStrip />
        <Toolbar />
        <Bookmarks />
        <Header />
        <div className="flex h-[1184px] overflow-hidden">
          <Sidebar />
          <MenuPanel />
          <SubMenu />
          <Main />
        </div>
      </div>
    </div>
  );
}
